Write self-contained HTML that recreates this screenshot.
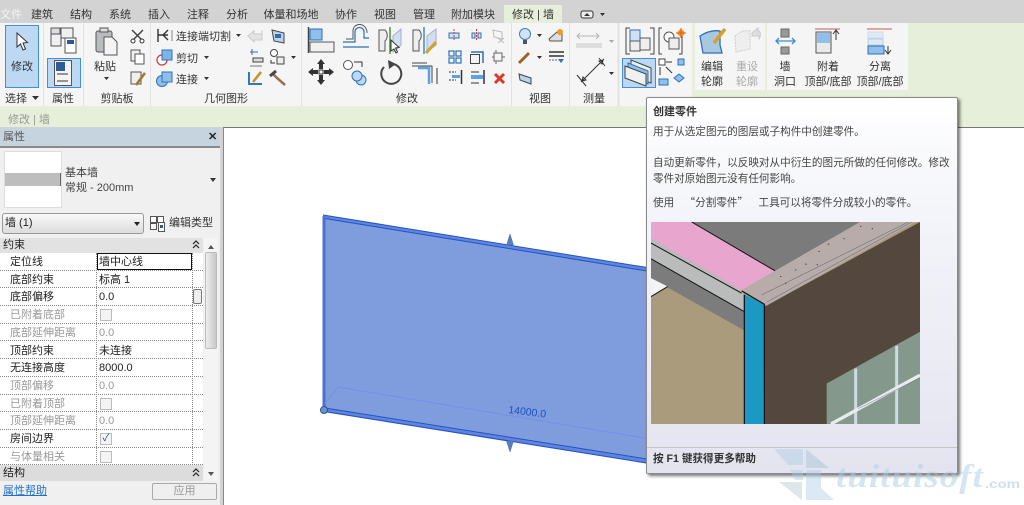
<!DOCTYPE html>
<html lang="zh"><head><meta charset="utf-8"><title>Revit</title>
<style>
html,body{margin:0;padding:0;background:#fff}
#r{position:relative;width:1024px;height:505px;overflow:hidden;background:#d3d3d3;font-family:"Liberation Sans","Noto Sans CJK SC",sans-serif;font-size:11px;color:#222}
.a{position:absolute}
svg text{font-family:"Liberation Sans","Noto Sans CJK SC",sans-serif;font-size:11px;fill:#333}
.m{text-anchor:middle}
.g{fill:#aaa!important}
.row{position:absolute;left:0;width:203px;height:17.7px;border-bottom:1px dotted #888;box-sizing:border-box;line-height:16px;white-space:nowrap}
.row b{font-weight:normal;position:absolute;left:10px;top:1px}
.row i{font-style:normal;position:absolute;left:99px;top:1px}
.row.d{color:#999}
.cb{position:absolute;left:100px;top:3px;width:10px;height:10px;border:1px solid #bbb;background:#f4f4f4}
.tt{position:absolute;left:7px;white-space:nowrap;font-size:10.6px;color:#444;line-height:14px}
</style></head><body>
<div id="r">
<!-- ribbon -->
<svg class="a" style="left:0;top:0" width="1024" height="128" viewBox="0 0 1024 128">
<rect width="1024" height="128" fill="#d3d3d3"/>
<rect y="23" width="1024" height="104" fill="#e6efd9"/>
<rect y="23" width="617" height="83" fill="#f5f5f5"/>
<rect x="620" y="23" width="72" height="83" fill="#f5f5f5"/>
<rect x="695" y="23" width="70" height="83" fill="#f5f5f5"/>
<rect x="767" y="23" width="141" height="83" fill="#f5f5f5"/>
<rect x="695" y="90" width="70" height="16" fill="#e6efd9"/><rect x="767" y="90" width="141" height="16" fill="#e6efd9"/>
<rect x="504" y="5" width="58" height="18" fill="#e6efd9"/>
<g stroke="#e2e2e2"><path d="M43.500 23V106M83.500 23V106M150.500 23V106M301.500 23V106M511.500 23V106M569.500 23V106M618.500 23V106"/></g>
<text x="11" y="18" class="m" style="fill:#f4f4f4">文件</text>
<g class="m" text-anchor="middle"><text x="42" y="18">建筑</text><text x="81" y="18">结构</text><text x="120" y="18">系统</text><text x="159" y="18">插入</text><text x="198" y="18">注释</text><text x="237" y="18">分析</text><text x="291" y="18">体量和场地</text><text x="346" y="18">协作</text><text x="385" y="18">视图</text><text x="424" y="18">管理</text><text x="473" y="18">附加模块</text><text x="533" y="18">修改 | 墙</text></g>
<rect x="581" y="11" width="12" height="7" rx="2" fill="#eee" stroke="#333"/><path d="M584 16h6l-3-3zM600 13h5l-2.500 3z" fill="#333"/>
<!-- select -->
<rect x="5.500" y="25.500" width="33" height="62" fill="#bcd8f3" stroke="#3f8fdc"/>
<path d="M17 33v14l3.500-3 2.500 6 2.500-1-2.500-6 4.500-.5z" fill="#fff" stroke="#333"/>
<text x="22" y="70" class="m" text-anchor="middle">修改</text>
<text x="16" y="102" text-anchor="middle">选择</text><path d="M32 96h7l-3.500 4z" fill="#333"/>
<!-- props -->
<g fill="#eef0f2" stroke="#555"><rect x="51" y="34" width="10" height="12"/><rect x="61" y="28" width="12" height="10"/><rect x="51" y="28" width="9" height="6" fill="#ddd"/><rect x="65" y="38" width="11" height="15" fill="#fff"/></g><rect x="67" y="40" width="7" height="4" fill="#2c5a94"/>
<rect x="47.500" y="58.500" width="33" height="29" fill="#bcd8f3" stroke="#3f8fdc"/>
<rect x="54.500" y="60.500" width="17" height="25" fill="#f4f4f4" stroke="#555"/><rect x="56" y="62" width="9" height="9" fill="#2f5d98"/><path d="M57 74h11M57 81h11" stroke="#333"/>
<text x="63" y="102" text-anchor="middle">属性</text>
<!-- clipboard -->
<rect x="96" y="31" width="16" height="21" rx="2" fill="#b8bcc0" stroke="#555"/><rect x="100" y="28" width="8" height="4" fill="#ddd" stroke="#555"/><path d="M104 37h8l5 5v13h-13z" fill="#f4f4f4" stroke="#555"/>
<text x="105" y="70" text-anchor="middle">粘贴</text><path d="M104 77h5l-2.500 3z" fill="#333"/>
<path d="M132 30l11 11M143 30l-11 11" stroke="#444" stroke-width="1.500"/><circle cx="133" cy="41" r="2" fill="#fff" stroke="#333"/><circle cx="142" cy="41" r="2" fill="#fff" stroke="#333"/>
<rect x="131" y="50" width="9" height="11" fill="#eee" stroke="#555"/><rect x="135" y="54" width="9" height="10" fill="#fff" stroke="#555"/>
<rect x="131" y="72" width="10" height="12" fill="#eee" stroke="#555"/><path d="M136 85l9-12" stroke="#a8742c" stroke-width="2.500"/>
<text x="117" y="102" text-anchor="middle">剪贴板</text>
<!-- geometry -->
<path d="M158 29v13M168 30l-5 5 5 5M158 35h10" fill="none" stroke="#333" stroke-width="1.400"/><path d="M172 30v11" stroke="#888"/>
<text x="176" y="40">连接端切割</text><path d="M236 34h5l-2.500 3z" fill="#333"/>
<circle cx="162" cy="60" r="5" fill="#fff" stroke="#d33" stroke-width="1.200"/><rect x="162" y="50" width="10" height="10" fill="#7fb5e6" stroke="#2a72ba"/>
<text x="176" y="62">剪切</text><path d="M204 56h5l-2.500 3z" fill="#333"/>
<circle cx="162" cy="81" r="5.500" fill="#8fbfe8" stroke="#2a72ba"/><rect x="162" y="72" width="10" height="10" fill="#8fbfe8" stroke="#2a72ba"/>
<text x="176" y="83">连接</text><path d="M204 77h5l-2.500 3z" fill="#333"/>
<path d="M248 36l6-5v3h8v-3h-1 1v9h-8v2z" fill="#e4e4e4" stroke="#ccc"/>
<path d="M272 30l12 3v10l-10-2z" fill="#bcd3ec" stroke="#444"/><rect x="275" y="34" width="6" height="4" fill="#2f6cb0"/>
<path d="M250 52h8M252 49v6" stroke="#2f6cb0"/><rect x="253" y="58" width="10" height="4" fill="#ddd" stroke="#444"/><path d="M250 66h12" stroke="#777"/>
<circle cx="274" cy="53" r="3.500" fill="#fff" stroke="#444"/><rect x="277" y="57" width="7" height="7" fill="#eee" stroke="#444"/><path d="M271 60v3h4" fill="none" stroke="#333"/><path d="M291 56h5l-2.500 3z" fill="#333"/>
<path d="M249 72v12h13" fill="none" stroke="#2f78c0" stroke-width="2"/><path d="M253 82l8-10" stroke="#d08a20" stroke-width="2.500"/>
<path d="M272 73l5 5 8 7" stroke="#a06a50" stroke-width="2.500"/><path d="M270 76l6-5" stroke="#444" stroke-width="3"/>
<text x="226" y="102" text-anchor="middle">几何图形</text>
<!-- modify -->
<path d="M308.500 27v26" stroke="#444" stroke-width="1.500"/><rect x="310" y="29" width="12" height="11" fill="#8fc0ec" stroke="#2a72ba"/><rect x="310" y="42" width="24" height="10" fill="#f0f0f0" stroke="#555"/>
<path d="M343 42h12v-10c0-6 9-6 9 0v6h5M343 47h26" fill="none" stroke="#2a72ba" stroke-width="1.200"/><path d="M346 39h7v-8c0-9 14-9 14 2" fill="none" stroke="#555"/>
<path d="M379 30h6c3 3 3 8 0 11v10h-6z" fill="#eee" stroke="#555"/><path d="M390 27v27" stroke="#3a9a3a" stroke-width="1.500"/><path d="M393 36l8-7v16l-8 7z" fill="#d0e0f0" stroke="#aac"/><path d="M391 40v11l3-2 2 4 1.500-1-2-4 3.500-.5z" fill="#fff" stroke="#333"/>
<path d="M413 30h6c3 3 3 8 0 11v10h-6z" fill="#eee" stroke="#555"/><path d="M424 27v27" stroke="#3a8ad8" stroke-width="1.500"/><path d="M427 36l9-7v16l-9 7z" fill="#d0e0f0" stroke="#aac"/><path d="M426 53l10-11" stroke="#d8a028" stroke-width="3"/>
<g fill="#cfe2f5" stroke="#2a72ba"><rect x="449" y="33" width="10" height="5"/><rect x="472" y="33" width="3" height="5"/><rect x="478" y="33" width="3" height="5"/></g><path d="M454 29v12M476.500 29v12" stroke="#d33" stroke-dasharray="2 1"/>
<g fill="none" stroke="#2a72ba" stroke-width="1.200"><rect x="449" y="51" width="5" height="5"/><rect x="456" y="51" width="5" height="5"/><rect x="449" y="58" width="5" height="5"/><rect x="456" y="58" width="5" height="5"/></g>
<path d="M471 52h12v11" fill="none" stroke="#2a72ba" stroke-width="1.500"/><rect x="470.500" y="54.500" width="9" height="9" fill="#f4f4f4" stroke="#444"/>
<g stroke="#333"><path d="M449 72h7M449 80h7" stroke-dasharray="2 1"/><path d="M461.500 70v14" stroke-width="1.500"/></g><rect x="452" y="75" width="8" height="3" fill="#5aa2e8"/>
<g stroke="#333"><path d="M471 72h8M471 83h8"/><path d="M484 70v14" stroke-width="1.500"/></g><rect x="471" y="75" width="12" height="4" fill="#5aa2e8"/>
<path d="M493 30l9 2v7l-8-2zM498 38l6 5M504 38l-6 5" fill="none" stroke="#bbb"/>
<rect x="494" y="53" width="8" height="8" fill="#f4f4f4" stroke="#666"/><path d="M492 57h2M502 57h3M496 50v3M496 61v3" stroke="#666"/>
<path d="M495 74l9 9M504 74l-9 9" stroke="#d83a2a" stroke-width="3"/>
<g fill="#333"><path d="M321 59l4 5h-8zM321 85l4-5h-8zM308 72l5-4v8zM334 72l-5-4v8z"/><path d="M319 64h4v5h-4zM319 75h4v5h-4zM313 70h5v4h-5zM324 70h5v4h-5z"/></g><rect x="319" y="70" width="4" height="4" fill="#fff" stroke="#333"/>
<circle cx="348" cy="65" r="4.500" fill="#fff" stroke="#555"/><path d="M354 62h8v5" fill="none" stroke="#333"/><circle cx="361" cy="80" r="5" fill="#bcd8f3" stroke="#2a72ba"/><circle cx="357" cy="76" r="5" fill="#bcd8f3" stroke="#2a72ba"/>
<path d="M384 67a10 10 0 1 0 9-3" fill="none" stroke="#444" stroke-width="2"/><path d="M388 60l8 4-7 5z" fill="#444"/>
<path d="M412 66h20v17M412 63h15" fill="none" stroke="#444"/><path d="M418 68h11v16" fill="none" stroke="#5aa2e8" stroke-width="2.500"/><path d="M437 84V68" stroke="#333"/>
<text x="407" y="102" text-anchor="middle">修改</text>
<!-- view -->
<circle cx="525" cy="34" r="5.500" fill="#cfe4f8" stroke="#3a7fc4"/><rect x="523" y="40" width="4" height="4" fill="#555"/><path d="M537 34h5l-2.500 3z" fill="#333"/>
<path d="M549 39l8-7 5 2v7h-12z" fill="#ddd" stroke="#555"/><circle cx="560" cy="32" r="3" fill="#f39a1e"/>
<path d="M519 63l10-10" stroke="#a0622a" stroke-width="3"/><path d="M537 56h5l-2.500 3z" fill="#333"/>
<path d="M549 52h15M549 56h15" stroke="#333" stroke-width="1.500"/><path d="M549 60h9" stroke="#666" stroke-dasharray="2 1"/><path d="M558 59h6l-3 4z" fill="#2a72ba"/>
<path d="M519 74l12 4v6l-11-4z" fill="#bcd3ec" stroke="#444"/>
<text x="540" y="102" text-anchor="middle">视图</text>
<!-- measure -->
<path d="M577 36h22M580 33l-3 3 3 3M596 33l3 3-3 3" fill="none" stroke="#b5b5b5"/><rect x="576" y="43" width="26" height="5" fill="#ddd"/><path d="M609 40h5l-2.500 3z" fill="#aaa"/>
<path d="M581 82l23-23M577 75l9 11M599 58l6 8M582 81l4-1-3-3zM603 60l-4 1 3 3z" fill="none" stroke="#333"/><path d="M609 72h5l-2.500 3z" fill="#333"/>
<text x="594" y="102" text-anchor="middle">测量</text>
<!-- create -->
<path d="M630 28h-4v26h4M650 28h4v26h-4" fill="none" stroke="#444"/><rect x="630" y="30" width="10" height="11" fill="#cfe2f5" stroke="#3a6fa8"/><rect x="630" y="41" width="10" height="10" fill="#eee" stroke="#555"/><rect x="640" y="38" width="10" height="12" fill="#eee" stroke="#555"/>
<path d="M662 28h-3v26h3M682 34v20h-3" fill="none" stroke="#444"/><circle cx="669" cy="37" r="5" fill="#fff" stroke="#555"/><rect x="669" y="38" width="10" height="11" fill="#eee" stroke="#555"/><circle cx="681" cy="33" r="3.500" fill="#f39a1e"/><path d="M681 28v10M676 33h10" stroke="#e2561e"/>
<rect x="622.500" y="58.500" width="33" height="29" fill="#bcd8f3" stroke="#3f8fdc"/>
<path d="M631 60l20 8v15l-20-8z" fill="#eee" stroke="#444"/><path d="M628 63l20 8v13l-20-8z" fill="#8fbfe8" stroke="#2a72ba"/><path d="M625 66l21 8v12l-21-8z" fill="#f0f0f0" stroke="#444"/>
<rect x="659" y="59" width="6" height="6" fill="#fff" stroke="#444"/><path d="M666 62h6M660 67v8M666 67l6 6" stroke="#333"/><rect x="678" y="59" width="6" height="6" fill="#8fc0ec" stroke="#2a72ba"/><rect x="659" y="79" width="9" height="6" fill="#8fc0ec" stroke="#2a72ba"/><path d="M679 74l5 4-5 4-5-4z" fill="#8fc0ec" stroke="#2a72ba"/>
<!-- mode -->
<path d="M700 36c8-5 14-6 20-5v14l2 8-19 0z" fill="#a8c8e0" stroke="#2a72ba" stroke-width="1.300"/><path d="M714 43l11-14" stroke="#d8a028" stroke-width="3.500"/>
<text x="712" y="70" text-anchor="middle">编辑</text><text x="712" y="85" text-anchor="middle">轮廓</text>
<path d="M735 36c6-5 10-6 15-5v18l-14 3z" fill="#eee" stroke="#ccc" stroke-dasharray="2 1"/><path d="M752 33l6-5v3c3 0 3 5 1 8v-3h-7z" fill="#ddd" stroke="#ccc"/>
<text x="747" y="70" text-anchor="middle" class="g">重设</text><text x="747" y="85" text-anchor="middle" class="g">轮廓</text>
<!-- modify wall -->
<rect x="781" y="29" width="8" height="8" fill="#999" stroke="#666"/><rect x="781" y="47" width="8" height="7" fill="#999" stroke="#666"/><path d="M776 41h19M779 38l-3 3 3 3M792 38l3 3-3 3" fill="none" stroke="#3a8ad8" stroke-width="1.300"/>
<text x="785" y="70" text-anchor="middle">墙</text><text x="785" y="85" text-anchor="middle">洞口</text>
<path d="M815 29h25" stroke="#c85a50"/><rect x="816" y="32" width="15" height="21" fill="#eaeaea" stroke="#555"/><rect x="817" y="33" width="13" height="10" fill="#8fc0ec"/><path d="M836 40v-9M833 34l3-4 3 4" fill="none" stroke="#333"/>
<text x="828" y="70" text-anchor="middle">附着</text><text x="828" y="85" text-anchor="middle">顶部/底部</text>
<path d="M867 29h25" stroke="#c85a50"/><rect x="868" y="32" width="15" height="6" fill="#dde9f4" stroke="#cde"/><rect x="868" y="39" width="15" height="6" fill="#dde9f4" stroke="#bcd"/><rect x="868" y="46" width="16" height="8" fill="#8fc0ec" stroke="#2a72ba"/><path d="M888 46v7M885 50l3 4 3-4" fill="none" stroke="#333"/>
<text x="880" y="70" text-anchor="middle">分离</text><text x="880" y="85" text-anchor="middle">顶部/底部</text>
<text x="8" y="123" style="fill:#999">修改 | 墙</text>
</svg>

<!-- canvas -->
<div class="a" style="left:223px;top:127px;width:801px;height:378px;background:#fff;border-left:1px solid #888;border-top:1px solid #777;box-sizing:border-box"></div>
<svg class="a" style="left:224px;top:128px" width="800" height="377" viewBox="224 128 800 377">
<polygon points="323,215 650,268 650,464 323,412" fill="#7f9cdd"/>
<polygon points="325,408 650,459 650,464 325,412" fill="#6284dc"/>
<polygon points="325,215 650,268 650,272 325,219" fill="#6284dc"/>
<path d="M323 215L650 268M325 218.500L650 271.500M325 408L650 459.500M325 411.500L650 463.500" stroke="#1f55c8" stroke-width="1" fill="none"/>
<path d="M324 216V410" stroke="#4a72d0" stroke-width="3"/>
<path d="M325 403L338 387L650 439" fill="none" stroke="#7090e8"/>
<circle cx="324" cy="410" r="3.500" fill="#6b94cc" stroke="#2a558c"/>
<path d="M510 234l3.500 11h-7zM510 452l-3.500-11h7z" fill="#5a7dbe" stroke="#4a6ca8" stroke-width=".5"/>
<text x="508" y="413" transform="rotate(7 508 413)" style="font-size:10.500px;fill:#1f50c0">14000.0</text>
</svg>

<!-- panel -->
<div class="a" style="left:0;top:128px;width:220px;height:377px;background:#f0f0f0;overflow:hidden">
 <div class="a" style="left:0;top:0;width:220px;height:18px;background:#c6d4e0;line-height:18px;color:#555;text-indent:3px">属性</div>
 <div class="a" style="left:208px;top:0;font-size:11px;line-height:18px;font-weight:bold;color:#222">✕</div>
 <div class="a" style="left:0;top:18px;width:220px;height:2px;background:#8a8a8a"></div>
 <div class="a" style="left:4px;top:23px;width:58px;height:57px;background:#fff;border:1px solid #ddd;box-sizing:border-box"></div>
 <div class="a" style="left:5px;top:45px;width:56px;height:13px;background:#bdbdbd;border-right:1px solid #666;box-sizing:border-box"></div>
 <div class="a" style="left:65px;top:38px;color:#444;line-height:15px;white-space:nowrap">基本墙<br>常规 - 200mm</div>
 <div class="a" style="left:210px;top:50px;width:0;height:0;border:3px solid transparent;border-top:4px solid #333"></div>
 <div class="a" style="left:2px;top:85px;width:142px;height:21px;border:1px solid #999;border-radius:3px;box-sizing:border-box;background:linear-gradient(#fafafa,#dcdcdc);line-height:19px;text-indent:2px;color:#222">墙 (1)</div>
 <div class="a" style="left:134px;top:94px;width:0;height:0;border:3px solid transparent;border-top:4px solid #222"></div>
 <svg class="a" style="left:149px;top:87px" width="18" height="18"><rect x="1.500" y="1.500" width="6" height="6" fill="#fff" stroke="#555"/><rect x="8.500" y="1.500" width="6" height="6" fill="#fff" stroke="#555"/><rect x="1.500" y="8.500" width="6" height="6" fill="#fff" stroke="#555"/><rect x="9.500" y="7.500" width="6" height="9" fill="#fff" stroke="#555"/><rect x="11" y="10" width="3" height="3" fill="#2c5a94"/></svg>
 <div class="a" style="left:169px;top:87px;color:#333;white-space:nowrap;line-height:16px">编辑类型</div>
 <div class="a" style="left:0;top:110px;width:203px;height:15px;background:#e2e2e2;line-height:15px;text-indent:3px;color:#222">约束</div>
 <svg class="a" style="left:192px;top:112px" width="8" height="10"><path d="M1 4l3-3 3 3M1 8l3-3 3 3" fill="none" stroke="#222" stroke-width="1.200"/></svg>
 <div class="a" style="left:0;top:125px;width:203px;height:212px;background:#fff"></div>
 <div class="a" style="left:96px;top:125px;height:212px;border-left:1px dotted #888"></div>
 <div class="a" style="left:192px;top:125px;height:212px;border-left:1px dotted #888"></div>
 <div class="row" style="top:125px"><b>定位线</b><i style="left:99px">墙中心线</i></div>
 <div class="a" style="left:97px;top:125px;width:95px;height:17px;border:1px solid #111;box-sizing:border-box"></div>
 <div class="row" style="top:142.700px"><b>底部约束</b><i>标高 1</i></div>
 <div class="row" style="top:160.400px"><b>底部偏移</b><i>0.0</i></div>
 <div class="row d" style="top:178.100px"><b>已附着底部</b><span class="cb"></span></div>
 <div class="row d" style="top:195.800px"><b>底部延伸距离</b><i>0.0</i></div>
 <div class="row" style="top:213.500px"><b>顶部约束</b><i>未连接</i></div>
 <div class="row" style="top:231.200px"><b>无连接高度</b><i>8000.0</i></div>
 <div class="row d" style="top:248.900px"><b>顶部偏移</b><i>0.0</i></div>
 <div class="row d" style="top:266.600px"><b>已附着顶部</b><span class="cb"></span></div>
 <div class="row d" style="top:284.300px"><b>顶部延伸距离</b><i>0.0</i></div>
 <div class="row" style="top:302px"><b>房间边界</b><span class="cb" style="color:#2a4a9a;font-size:10px;line-height:10px;text-align:center">✓</span></div>
 <div class="row d" style="top:319.700px"><b>与体量相关</b><span class="cb"></span></div>
 <div class="a" style="left:0;top:337px;width:203px;height:16px;background:#dcdcdc;line-height:16px;text-indent:3px;color:#222">结构</div>
 <svg class="a" style="left:192px;top:340px" width="8" height="10"><path d="M1 4l3-3 3 3M1 8l3-3 3 3" fill="none" stroke="#222" stroke-width="1.200"/></svg>
 <div class="a" style="left:204px;top:110px;width:14px;height:243px;background:#f4f4f4"></div>
 <div class="a" style="left:205px;top:124px;width:12px;height:97px;background:linear-gradient(90deg,#eee,#c8c8c8);border:1px solid #bbb;box-sizing:border-box;border-radius:2px"></div>
 <div class="a" style="left:193px;top:161px;width:9px;height:15px;background:#eee;border:1px solid #777;border-radius:2px;box-sizing:border-box"></div>
 <div class="a" style="left:208px;top:114px;width:0;height:0;border:3px solid transparent;border-bottom:4px solid #555"></div>
 <div class="a" style="left:208px;top:344px;width:0;height:0;border:3px solid transparent;border-top:4px solid #555"></div>
 <div class="a" style="left:3px;top:356px;color:#1f6fd0;text-decoration:underline;line-height:15px">属性帮助</div>
 <div class="a" style="left:152px;top:355px;width:65px;height:17px;border:1px solid #aaa;border-radius:2px;box-sizing:border-box;background:#efefef;color:#999;text-align:center;line-height:15px">应用</div>
</div>

<!-- tooltip -->
<div class="a" style="left:646px;top:97px;width:312px;height:377px;border:1px solid #8a8a8a;border-radius:2px;box-sizing:border-box;background:linear-gradient(#fff,#f4f5fa 30%,#e4e4f0);box-shadow:2px 2px 3px rgba(0,0,0,.55)">
 <div class="tt" style="left:6px;top:7px;font-weight:bold;font-size:11px;color:#333">创建零件</div>
 <div class="tt" style="left:6px;top:27px">用于从选定图元的图层或子构件中创建零件。</div>
 <div class="tt" style="left:6px;top:58px">自动更新零件，以反映对从中衍生的图元所做的任何修改。修改</div>
 <div class="tt" style="left:6px;top:74px">零件对原始图元没有任何影响。</div>
 <div class="tt" style="left:6px;top:98px;font-family:'Noto Sans CJK SC',sans-serif;word-spacing:8px">使用 “分割零件” 工具可以将零件分成较小的零件。</div>
 <svg class="a" style="left:4px;top:124px" width="269" height="202" viewBox="18 22 807 604" preserveAspectRatio="none">
  <rect x="18" y="22" width="807" height="604" fill="#a99b7c"/>
  <polygon points="140,22 645,22 390,168" fill="#7b7b7b"/>
  <polygon points="18,22 140,22 390,168 290,226 18,72" fill="#e8a6cf"/>
  <polygon points="18,72 290,226 298,240 298,290 18,132" fill="#b9bcba"/>
  <polygon points="18,132 298,290 305,350 18,190" fill="#7c7c7c"/>
  <polygon points="18,190 68,215 18,245" fill="#f4f4f4"/>
  <path d="M18 245L68 215M140 22L390 168M18 132L298 290M18 85L290 235" stroke="#111" stroke-width="3" fill="none"/>
  <polygon points="358,275 825,22 825,626 358,626" fill="#54473d"/>
  <polygon points="290,226 645,22 810,22 365,272" fill="#b8acab"/>
  <path d="M350 240L790 22M365 262L800 22" stroke="#777" stroke-width="2"/>
  <path d="M405 185h4M450 165h4M480 148h5M520 110h4M548 88h5M595 72h4M645 35h4M680 42h4M420 205h4M515 150h4" stroke="#444" stroke-width="3"/>
  <polygon points="296,238 358,268 356,626 298,626" fill="#1c98c4"/>
  <path d="M290 228L358 268V626M298 240V626" stroke="#0c0c0c" stroke-width="3.500" fill="none"/>
  <polygon points="545,505 825,350 825,626 545,626" fill="#85988c"/>
  <path d="M632 460V626M755 392V626" stroke="#cfdbe2" stroke-width="9"/>
  <path d="M558 626L825 480" stroke="#e6ecee" stroke-width="10"/><path d="M640 580L825 488" stroke="#445" stroke-width="1"/>
 </svg>
 <div class="a" style="left:0;top:349px;width:310px;border-top:1px solid #c5c5c8"></div>
 <div class="tt" style="left:6px;top:354px;font-weight:bold;color:#333">按 F1 键获得更多帮助</div>
</div>

<!-- watermark -->
<svg class="a" style="left:770px;top:445px" width="254" height="60" viewBox="770 445 254 60">
 <g fill="#a9cde4" opacity=".42"><polygon points="774,449 803,449 803,465 788,465"/><polygon points="806,449 829,468 806,468" fill="#9fc0d0"/><polygon points="806,470 821,470 821,488 834,500 806,500"/><polygon points="779,482 802,482 802,500" fill="#b0c8c8"/><polygon points="790,470 803,470 803,480 795,480"/></g>
 <text x="836" y="487" style="font-family:'Liberation Serif',serif;font-style:italic;font-weight:bold;font-size:33px;fill:#a9cde4;fill-opacity:.5;letter-spacing:1px" textLength="148" lengthAdjust="spacingAndGlyphs">tuituisoft</text>
 <text x="985" y="488" style="font-family:'Liberation Sans',sans-serif;font-weight:bold;font-size:12px;fill:#a9cde4;fill-opacity:.6" textLength="35" lengthAdjust="spacingAndGlyphs">.com</text>
</svg>
</div>
</body></html>
